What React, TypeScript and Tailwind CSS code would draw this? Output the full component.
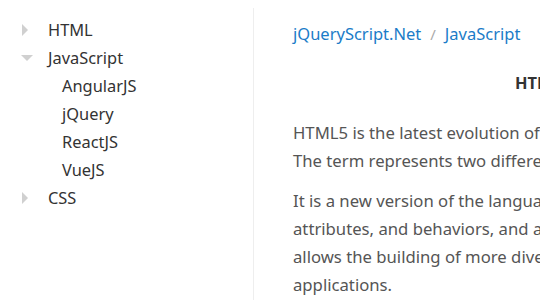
import React from 'react';

const font = { fontFamily: '"Noto Sans", "Open Sans", sans-serif' };

function Arrow({ open }: { open?: boolean }) {
  return open ? (
    <svg width="12" height="8" viewBox="0 0 12 8" className="absolute left-[21px] top-[11px]">
      <path d="M0 0 L12 0 L6 6 Z" fill="#d0d0d0" />
    </svg>
  ) : (
    <svg width="8" height="12" viewBox="0 0 8 12" className="absolute left-[22px] top-[8px]">
      <path d="M0 0 L6 6 L0 12 Z" fill="#d0d0d0" />
    </svg>
  );
}

const tree = [
  { label: 'HTML', open: false, children: [] as string[] },
  { label: 'JavaScript', open: true, children: ['AngularJS', 'jQuery', 'ReactJS', 'VueJS'] },
  { label: 'CSS', open: false, children: [] as string[] },
];

export default function App() {
  return (
    <div className="w-[540px] h-[300px] overflow-hidden bg-white flex text-[16.4px]" style={font}>
      {/* Sidebar tree */}
      <ul className="w-[253px] shrink-0 pt-4 text-[#333]">
        {tree.map((node) => (
          <li key={node.label}>
            <div className="relative h-7 leading-7 pl-12">
              <Arrow open={node.open} />
              {node.label}
            </div>
            {node.open && (
              <ul>
                {node.children.map((c) => (
                  <li key={c} className="h-7 leading-7 pl-[62px]">{c}</li>
                ))}
              </ul>
            )}
          </li>
        ))}
      </ul>

      {/* Content */}
      <div className="mt-2 border-l border-[#eeeeee] pl-[39px] pt-3 shrink-0">
        <div className="w-[500px]">
          <div className="h-7 leading-7 text-[16.5px] text-[#1b7cc8] whitespace-nowrap">
            <span>jQueryScript.Net</span>
            <span className="text-[#aaa] px-[9px] text-[15px]">/</span>
            <span>JavaScript</span>
          </div>
          <h1 className="mt-[21px] h-7 leading-7 text-center font-bold text-[#333]">HTML5</h1>
          <div className="mt-[22px] text-[16.7px] text-[#555] leading-7 whitespace-nowrap">
            <p>
              HTML5 is the latest evolution of the standard that defines HTML.
              <br />
              The term represents two different concepts.
            </p>
            <p className="mt-3">
              It is a new version of the language HTML, with new elements,
              <br />
              attributes, and behaviors, and a larger set of technologies that
              <br />
              allows the building of more diverse and powerful Web sites and
              <br />
              applications.
            </p>
          </div>
        </div>
      </div>
    </div>
  );
}
